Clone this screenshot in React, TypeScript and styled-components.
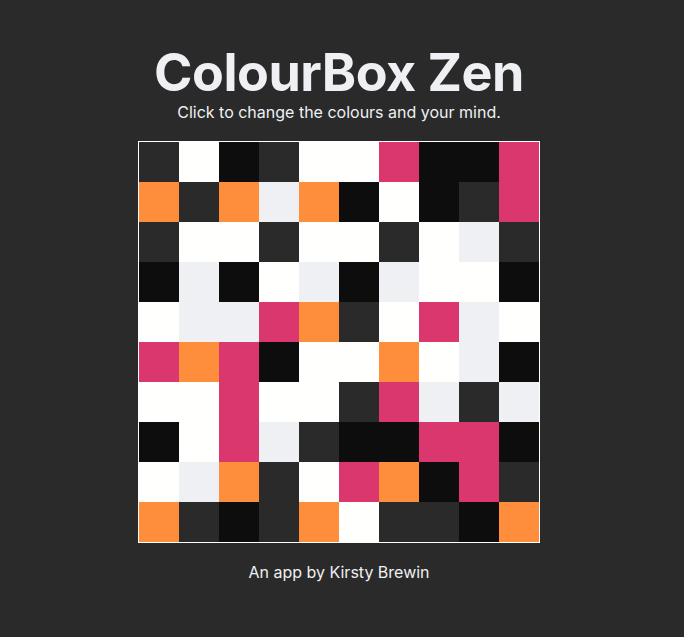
import * as React from 'react'
import styled, { createGlobalStyle } from 'styled-components'

const palette = {
  D: '#2a2a2a',
  B: '#0d0d0d',
  W: '#fffffe',
  L: '#eff0f3',
  O: '#ff8e3c',
  P: '#d9376e',
}

type Key = keyof typeof palette

const rows = [
  'DWBDWWPBBP',
  'ODOLOBWBDP',
  'DWWDWWDWLD',
  'BLBWLBLWWB',
  'WLLPODWPLW',
  'POPBWWOWLB',
  'WWPWWDPLDL',
  'BWPLDBBPPB',
  'WLODWPOBPD',
  'ODBDOWDDBO',
]

const keys = Object.keys(palette) as Key[]

const GlobalStyle = createGlobalStyle`
  html, body {
    margin: 0;
    padding: 0;
    background: #2a2a2a;
  }
  body {
    font-family: Inter, "Liberation Sans", sans-serif;
    color: #eff0f3;
  }
`

const Page = styled.main`
  display: flex;
  flex-direction: column;
  align-items: center;
  min-height: 637px;
  padding: 42px 6px 0 0;
  box-sizing: border-box;
`

const Title = styled.h1`
  margin: 0;
  font-size: 52px;
  font-weight: 700;
  line-height: 1.2;
  letter-spacing: -0.5px;
`

const Subtitle = styled.p`
  margin: -1px 0 0;
  font-size: 16px;
  line-height: 19px;
`

const Board = styled.div`
  margin-top: 19px;
  display: grid;
  grid-template-columns: repeat(10, 40px);
  grid-template-rows: repeat(10, 40px);
  border: 1px solid #fffffe;
  cursor: pointer;
`

const Cell = styled.div<{ $colour: string }>`
  background: ${p => p.$colour};
`

const Credit = styled.p`
  margin: 20px 0 0;
  font-size: 16px;
  line-height: 19px;
`

export default function App() {
  const [grid, setGrid] = React.useState<Key[][]>(() =>
    rows.map(r => r.split('') as Key[])
  )

  const shuffle = () =>
    setGrid(g => g.map(r => r.map(() => keys[Math.floor(Math.random() * keys.length)])))

  return (
    <>
      <GlobalStyle />
      <Page>
        <Title>ColourBox Zen</Title>
        <Subtitle>Click to change the colours and your mind.</Subtitle>
        <Board onClick={shuffle}>
          {grid.map((r, y) =>
            r.map((k, x) => <Cell key={`${y}-${x}`} $colour={palette[k]} />)
          )}
        </Board>
        <Credit>An app by Kirsty Brewin</Credit>
      </Page>
    </>
  )
}
